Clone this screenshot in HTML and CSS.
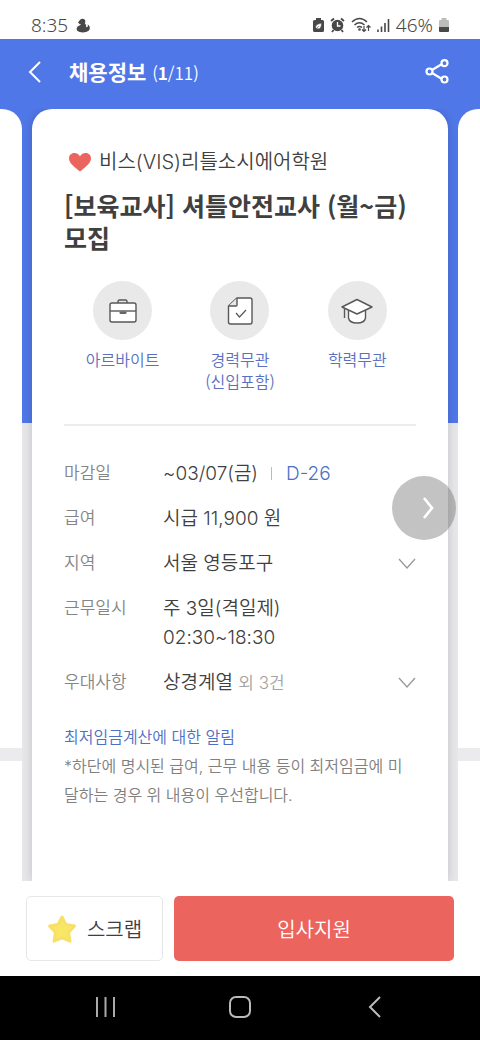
FILE: index.html
```html
<!DOCTYPE html>
<html lang="ko">
<head>
<meta charset="utf-8">
<meta name="viewport" content="width=device-width, initial-scale=1">
<title>채용정보</title>
<link rel="stylesheet" href="styles.css">
</head>
<body>
<div class="status">
  <span class="status-group"><span>8:35</span>
    <svg width="14" height="16" viewBox="0 0 14 16" fill="#484848"><circle cx="6.500" cy="4.500" r="2.800"/><path d="M2 5.500l2-2.500 2 3-2 1.500z"/><path d="M5 6h3.500c1.500 1 2 3 1.500 4 1.500.5 2.500-.5 1.500-2.500 2.500 1 3 4 1.500 6-3 2.500-9 2.500-11.500.5-1.500-2-1-4 1-5C4 8.500 5 8 5 6z"/></svg>
  </span>
  <span class="status-group status-icons">
    <svg width="11" height="16" viewBox="0 0 11 16"><path d="M3 1h5v2h1.500q1.500 0 1.500 1.500v9q0 1.500-1.500 1.500h-8Q0 15 0 13.500v-9Q0 3 1.500 3H3z" fill="#484848"/><path d="M2.500 10q0-3 6-4 0 6-3.500 6-2.500 0-2.500-2M2.500 12.500L6 9" fill="#fff" stroke="#484848" stroke-width=".6"/></svg>
    <svg width="15" height="16" viewBox="0 0 15 16"><circle cx="7.500" cy="8.500" r="5.800" fill="#484848"/><path d="M1 4l3-2.500M14 4l-3-2.500M3.500 13L2 15M11.500 13l1.500 2" stroke="#484848" stroke-width="1.800"/><path d="M7.500 5v4h3" fill="none" stroke="#fff" stroke-width="1.300"/></svg>
    <svg width="20" height="16" viewBox="0 0 20 16" fill="none" stroke="#484848" stroke-width="1.500"><path d="M1 5q7.500-7 15 0M3.500 8q5-4.500 10 0M6 10.500q2.500-2 5 0"/><path d="M13 9v5M11 12.500l2 2 2-2M17.500 14V9M15.500 10.500l2-2 2 2" stroke-width="1.200"/><circle cx="8.500" cy="12.500" r=".6"/></svg>
    <svg width="13" height="16" viewBox="0 0 13 16" stroke="#484848" stroke-width="1.600"><path d="M1 12.500V15M4.500 9.500V15M8 6v9M11.500 2v13"/></svg>
    <span>46%</span>
    <svg width="10" height="15" viewBox="0 0 10 15"><path d="M2.500 0h5v2H9q1 0 1 1v6H0V3q0-1 1-1h1.500z" fill="#bcbcbc"/><path d="M0 9h10v4q0 1-1 1H1q-1 0-1-1z" fill="#484848"/></svg>
  </span>
</div>
<header class="header">
  <button class="icon-button" aria-label="뒤로"><svg width="14" height="22" viewBox="0 0 14 22"><path d="M12 1L2 11l10 10" fill="none" stroke="#fff" stroke-width="2"/></svg></button>
  <h1 class="page-title">채용정보 <span class="count">(<b>1</b>/11)</span></h1>
  <button class="icon-button" aria-label="공유"><svg width="24" height="26" viewBox="0 0 24 26" fill="none" stroke="#fff" stroke-width="2.200"><path d="M7 11l10-6M7 14l10 6"/><circle cx="4.500" cy="12.500" r="3"/><circle cx="19.500" cy="4.200" r="3"/><circle cx="19.500" cy="20.500" r="3"/></svg></button>
</header>
<main class="deck">
  <div class="peek peek-left"></div>
  <article class="card">
    <p class="company"><svg width="22" height="19" viewBox="0 0 22 19"><path d="M11 18.500C7 15 0 10.500 0 5.500 0 1.500 3 0 5.500 0 8 0 10 1.500 11 3.500 12 1.500 14 0 16.500 0 19 0 22 1.500 22 5.500c0 5-7 9.500-11 13z" fill="#ec645e"/></svg>비스(VIS)리틀소시에어학원</p>
    <h2 class="job">[보육교사] 셔틀안전교사 (월~금) 모집</h2>
    <ul class="traits">
      <li><span class="disc"><svg width="30" height="30" viewBox="0 0 30 30" fill="none" stroke="#585858" stroke-width="1.400"><path d="M10 7V5.500Q10 4 11.500 4h6Q19 4 19 5.500V7"/><rect x="2" y="7" width="26" height="19" rx="2" fill="#fff"/><path d="M2 15h26"/><path d="M11.500 15.500h7v1.500q0 1-1 1h-5q-1 0-1-1z" fill="#666" stroke="none"/></svg></span>아르바이트</li>
      <li><span class="disc"><svg width="30" height="30" viewBox="0 0 30 30" fill="none" stroke="#585858" stroke-width="1.400"><path d="M12 2h13q2 0 2 2v22q0 2-2 2H5.500q-2 0-2-2V10z" fill="#fff"/><path d="M12 2v7q0 1-1 1H3.500" fill="#e8e8e8"/><path d="M11 17l3.500 4 6.500-7" stroke-width="1.200"/></svg></span>경력무관<br>(신입포함)</li>
      <li><span class="disc"><svg width="32" height="30" viewBox="0 0 32 30" fill="none" stroke="#585858" stroke-width="1.400"><path d="M7.500 13v9q1 5 8.500 5t8.500-5v-9" fill="#fff"/><path d="M16 3.500L1 11l15 7 15-7z" fill="#fff" stroke-linejoin="round"/><path d="M3.500 12.500V22"/></svg></span>학력무관</li>
    </ul>
    <dl class="details">
      <div class="row"><dt>마감일</dt><dd>~03/07(금)<i class="bar"></i><span class="dday">D-26</span></dd></div>
      <div class="row"><dt>급여</dt><dd>시급 11,900 원</dd></div>
      <div class="row"><dt>지역</dt><dd>서울 영등포구</dd><button class="icon-button" aria-label="지역 펼치기"><svg width="18" height="12" viewBox="0 0 18 12"><path d="M1 1l8 9 8-9" fill="none" stroke="#999" stroke-width="1.300"/></svg></button></div>
      <div class="row"><dt>근무일시</dt><dd>주 3일(격일제)<br>02:30~18:30</dd></div>
      <div class="row"><dt>우대사항</dt><dd>상경계열 <span class="extra">외 3건</span></dd><button class="icon-button" aria-label="우대사항 펼치기"><svg width="18" height="12" viewBox="0 0 18 12"><path d="M1 1l8 9 8-9" fill="none" stroke="#999" stroke-width="1.300"/></svg></button></div>
    </dl>
    <p class="note"><a href="#">최저임금계산에 대한 알림</a><br>*하단에 명시된 급여, 근무 내용 등이 최저임금에 미달하는 경우 위 내용이 우선합니다.</p>
  </article>
  <div class="peek peek-right"></div>
  <button class="next" aria-label="다음 공고"><svg width="12" height="22" viewBox="0 0 12 22"><path d="M2 1l8 10-8 10" fill="none" stroke="#fff" stroke-width="2.600"/></svg></button>
</main>
<footer class="actions">
  <button class="scrap"><svg width="30" height="30" viewBox="0 0 30 30"><path d="M15 3l3.800 7.500 8.700 1.500-6 6.500 1.500 8.700-8-3.400-8 3.400 1.500-8.700-6-6.500 8.700-1.500z" fill="#f9e763" stroke="#f6e068" stroke-width="3" stroke-linejoin="round"/></svg>스크랩</button>
  <button class="apply">입사지원</button>
</footer>
<nav class="system">
  <button class="icon-button" aria-label="최근 앱"><svg width="22" height="22" viewBox="0 0 22 22"><path d="M3 1v20M11.500 1v20M20 1v20" stroke="#aaa" stroke-width="2"/></svg></button>
  <button class="icon-button" aria-label="홈"><svg width="22" height="22" viewBox="0 0 22 22"><rect x="1" y="1" width="20" height="20" rx="6" fill="none" stroke="#bbb" stroke-width="2"/></svg></button>
  <button class="icon-button" aria-label="이전"><svg width="22" height="22" viewBox="0 0 22 22"><path d="M16 1L6 11l10 10" fill="none" stroke="#bbb" stroke-width="2"/></svg></button>
</nav>
</body>
</html>
```
FILE: styles.css
```css
* { box-sizing: border-box; }
body {
  margin: 0;
  min-height: 100vh;
  display: flex;
  flex-direction: column;
  background: #fff;
  color: #404040;
  font-family: Inter, "Noto Sans CJK KR", sans-serif;
  font-weight: 350;
}
button { font: inherit; border: 0; padding: 0; background: none; }
svg { display: block; flex: none; }
.icon-button { display: flex; align-items: center; justify-content: center; }
h1, h2, p, ul, dl, dd { margin: 0; padding: 0; }

.status {
  display: flex;
  justify-content: space-between;
  align-items: center;
  height: 39px;
  padding: 11px 31px 0;
  font: 300 19px/26px "Noto Sans", sans-serif;
  color: #484848;
}
.status-group { display: flex; align-items: center; gap: 8px; }
.status-icons { gap: 6px; }

.header {
  display: flex;
  align-items: center;
  height: 70px;
  padding: 0 31px 4px 28px;
  background: #5077e7;
  color: #fff;
}
.page-title {
  flex: 1;
  margin-left: 27px;
  font: 700 21px/30px "Noto Sans CJK KR", sans-serif;
}
.count { font-size: 17px; font-weight: 350; }

.deck {
  position: relative;
  flex: 1;
  display: grid;
  grid-template-columns: 22px 1fr 22px;
  gap: 10px;
  overflow: hidden;
  background: linear-gradient(#5077e7 314px, #e7e7e9 314px);
}
.peek { background: linear-gradient(#fff 639px, #ebebed 639px, #ebebed 652px, #fff 652px); }
.peek-left { border-top-right-radius: 20px; }
.peek-right { border-top-left-radius: 20px; }
.card {
  padding: 37px 32px 60px;
  border-radius: 20px 20px 0 0;
  background: #fff;
  box-shadow: 0 0 10px rgba(0, 0, 0, .16);
}
.company {
  display: flex;
  align-items: center;
  gap: 8px;
  padding-left: 5px;
  font-size: 20px;
  line-height: 32px;
}
.job {
  margin-top: 11px;
  font: 700 25px/32px "Noto Sans CJK KR", sans-serif;
}
.traits {
  display: grid;
  grid-template-columns: repeat(3, 1fr);
  padding: 28px 0 32px;
  border-bottom: 2px solid #ededed;
  list-style: none;
  text-align: center;
  font: 350 16px/22px "Noto Sans CJK KR", sans-serif;
  color: #5a70c0;
}
.disc {
  display: grid;
  place-items: center;
  width: 59px;
  height: 59px;
  margin: 0 auto 8px;
  border-radius: 50%;
  background: #e9e9e9;
}
.details {
  display: grid;
  gap: 16px;
  padding-top: 33px;
}
.row {
  display: grid;
  grid-template-columns: 99px 1fr auto;
  font-size: 19px;
  line-height: 29px;
}
dt { font-size: 17px; color: #858585; }
.row .icon-button { width: 18px; height: 29px; }
.bar {
  display: inline-block;
  width: 1px;
  height: 13px;
  margin: 0 14px 0 13px;
  background: #bbb;
}
.dday { color: #4d6fc4; }
.extra { font-size: 17px; color: #a3a3a3; }
.note {
  margin-top: 25px;
  font-size: 16px;
  line-height: 29px;
  color: #808080;
}
.note a { color: #4d6fc4; text-decoration: none; }
.next {
  position: absolute;
  top: 367px;
  right: 24px;
  display: grid;
  place-items: center;
  width: 64px;
  height: 64px;
  padding-left: 8px;
  border-radius: 50%;
  background: rgba(90, 90, 90, .36);
}
.actions {
  display: grid;
  grid-template-columns: 137px 1fr;
  gap: 11px;
  padding: 15px 26px;
}
.scrap, .apply { height: 65px; border-radius: 5px; font-size: 20px; }
.scrap {
  display: flex;
  align-items: center;
  justify-content: center;
  gap: 10px;
  border: 1px solid #e7e7ea;
  color: #3d3d48;
}
.apply { background: #ec645e; color: #fff; }
.system {
  display: grid;
  grid-template-columns: repeat(3, 1fr);
  place-items: center;
  height: 64px;
  padding: 0 38px 2px;
  background: #000;
}
```
